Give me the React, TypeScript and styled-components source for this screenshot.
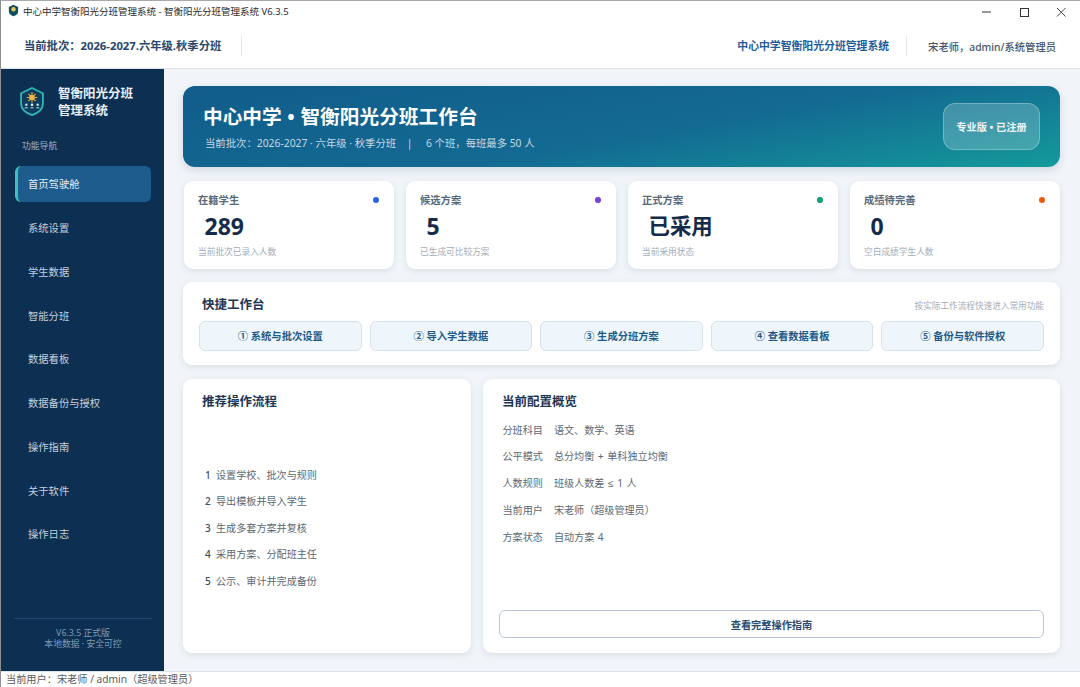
import React from 'react'
import styled, { createGlobalStyle } from 'styled-components'

const FONT = `"Noto Sans", "Noto Sans CJK SC", sans-serif`

const GlobalStyle = createGlobalStyle`
    html, body {
        margin: 0;
        padding: 0;
        background: #ffffff;
        font-family: ${FONT};
    }
    * {
        box-sizing: border-box;
    }
`

const Window = styled.div`
    width: 1080px;
    height: 687px;
    display: flex;
    flex-direction: column;
    overflow: hidden;
    background: #ffffff;
    border-top: 1px solid #a9a9a9;
    border-left: 1px solid #8f8f8f;
`

const TitleBar = styled.div`
    height: 22px;
    flex: none;
    display: flex;
    align-items: center;
    padding: 0 0 3px 7px;
    font-size: 9.5px;
    color: #2b2b2b;
`

const TitleText = styled.span`
    margin-left: 4px;
    flex: 1;
`

const WinButtons = styled.div`
    display: flex;
    align-items: center;
    gap: 27px;
    padding-right: 14px;
    margin-top: 2px;
`

const AppHeader = styled.header`
    height: 46px;
    flex: none;
    display: flex;
    align-items: center;
    padding: 1px 24px 0 23px;
    background: #ffffff;
    border-bottom: 1px solid #dde3ea;
`

const BatchLabel = styled.div`
    font-size: 11.3px;
    font-weight: 700;
    color: #27466b;
    padding-right: 20px;
    height: 20px;
    line-height: 20px;
    border-right: 1px solid #e3e8ee;
`

const Spacer = styled.div`
    flex: 1;
`

const SchoolName = styled.div`
    font-size: 10.85px;
    font-weight: 700;
    color: #1f5d99;
    padding-right: 16.5px;
    height: 20px;
    line-height: 20px;
    border-right: 1px solid #e3e8ee;
`

const UserName = styled.div`
    font-size: 10.3px;
    font-weight: 500;
    color: #44566c;
    padding-left: 21.5px;
`

const Body = styled.div`
    flex: 1;
    display: flex;
    min-height: 0;
`

const Sidebar = styled.aside`
    width: 163px;
    flex: none;
    display: flex;
    flex-direction: column;
    background: #0d2f52;
    padding: 0 13px 0 14px;
`

const Brand = styled.div`
    display: flex;
    align-items: center;
    gap: 13px;
    padding: 16px 0 0 4px;
`

const BrandName = styled.div`
    font-size: 12.5px;
    font-weight: 700;
    line-height: 17px;
    color: #e9eff6;
`

const NavHeading = styled.div`
    font-size: 8.8px;
    color: #9fb4c9;
    margin: 20px 0 0 7px;
    line-height: 14px;
`

const NavList = styled.nav`
    display: flex;
    flex-direction: column;
    gap: 8px;
    margin-top: 13px;
`

const NavItem = styled.div<{ $active?: boolean }>`
    height: 35.75px;
    display: flex;
    align-items: center;
    padding-left: ${(p) => (p.$active ? '10px' : '13px')};
    font-size: 10.3px;
    color: ${(p) => (p.$active ? '#e6edf5' : '#c3d0de')};
    border-radius: 6px;
    background: ${(p) => (p.$active ? '#1f5c8e' : 'transparent')};
    border-left: ${(p) => (p.$active ? '3px solid #3cc0bd' : 'none')};
`

const SideFooter = styled.div`
    margin: auto -1px 0 -1px;
    border-top: 1px solid #23466b;
    padding: 9px 0 21px;
    text-align: center;
    font-size: 8.8px;
    line-height: 11px;
    color: #7f9ab5;
`

const Main = styled.main`
    flex: 1;
    min-width: 0;
    display: flex;
    flex-direction: column;
    gap: 13px;
    padding: 17px 20px 18px 19px;
    background: #f1f5f9;
`

const Hero = styled.section`
    height: 81px;
    flex: none;
    margin-bottom: 1px;
    display: flex;
    align-items: center;
    justify-content: space-between;
    padding: 0 20px;
    border-radius: 12px;
    background: linear-gradient(170deg, #115c8b 0%, #136a92 55%, #149a9b 100%);
    box-shadow: 0 3px 8px rgba(40, 70, 100, 0.16);
`

const HeroTitle = styled.div`
    font-size: 19.7px;
    font-weight: 700;
    line-height: 27px;
    word-spacing: 0.5px;
    color: #ffffff;
    white-space: pre;
`

const HeroSub = styled.div`
    font-size: 10.35px;
    line-height: 14px;
    margin: 6px 0 0 2px;
    color: #c5d8e4;
    white-space: pre;
`

const HeroBadge = styled.div`
    width: 97px;
    height: 47px;
    display: flex;
    align-items: center;
    justify-content: center;
    border-radius: 12px;
    font-size: 10.2px;
    font-weight: 700;
    color: #eef5f8;
    background: rgba(255, 255, 255, 0.2);
    border: 1px solid rgba(255, 255, 255, 0.28);
`

const StatGrid = styled.section`
    display: grid;
    grid-template-columns: repeat(4, 1fr);
    gap: 12px;
    padding: 0 0.5px;
    flex: none;
`

const Card = styled.div`
    background: #ffffff;
    border-radius: 9px;
    box-shadow: 0 2px 6px rgba(50, 80, 110, 0.13);
`

const StatCard = styled(Card)`
    height: 88px;
    padding: 12px 15px 0 14.5px;
`

const StatHead = styled.div`
    display: flex;
    align-items: center;
    justify-content: space-between;
    font-size: 10.3px;
    font-weight: 700;
    line-height: 14px;
    color: #5a6978;
`

const Dot = styled.i<{ $color: string }>`
    width: 6px;
    height: 6px;
    border-radius: 50%;
    background: ${(p) => p.$color};
`

const StatValue = styled.div<{ $text?: boolean }>`
    font-size: ${(p) => (p.$text ? '21.4px' : '23px')};
    font-weight: 700;
    line-height: 30px;
    margin: 4px 0 0 6.5px;
    color: #142b49;
`

const StatNote = styled.div`
    font-size: 8.7px;
    line-height: 13px;
    margin-top: 5px;
    color: #a3adb8;
`

const QuickPanel = styled(Card)`
    height: 83px;
    flex: none;
    margin-bottom: 1px;
    padding: 13px 16px 0;
`

const QuickHead = styled.div`
    display: flex;
    align-items: center;
    justify-content: space-between;
    height: 20px;
    padding-left: 3px;
`

const PanelTitle = styled.div`
    font-size: 12.5px;
    font-weight: 700;
    line-height: 20px;
    color: #1d3654;
`

const QuickHint = styled.div`
    font-size: 8.65px;
    color: #a3adb8;
`

const QuickRow = styled.div`
    display: grid;
    grid-template-columns: repeat(5, 1fr);
    gap: 8px;
    margin-top: 6px;
`

const QuickButton = styled.div`
    height: 30px;
    display: flex;
    align-items: center;
    justify-content: center;
    padding-bottom: 1px;
    border-radius: 6px;
    font-size: 10.3px;
    font-weight: 700;
    color: #1e5a88;
    background: #eef5fb;
    border: 1px solid #d6e1ec;
`

const BottomRow = styled.section`
    flex: 1;
    min-height: 0;
    display: grid;
    grid-template-columns: 288px 1fr;
    gap: 12px;
`

const FlowPanel = styled(Card)`
    padding: 13px 19px;
`

const FlowList = styled.div`
    display: flex;
    flex-direction: column;
    gap: 12.4px;
    margin-top: 56px;
    padding-left: 3px;
`

const FlowItem = styled.div`
    font-size: 10.1px;
    line-height: 14px;
    color: #5a6875;
    white-space: pre;
`

const FlowNumber = styled.span`
    font-weight: 500;
    color: #3f4e5c;
`

const ConfigPanel = styled(Card)`
    display: flex;
    flex-direction: column;
    padding: 13px 16px 14px 19px;
`

const ConfigList = styled.div`
    display: flex;
    flex-direction: column;
    gap: 12.4px;
    margin-top: 11px;
    padding-left: 0.5px;
`

const ConfigRow = styled.div`
    display: flex;
    gap: 11px;
    font-size: 10.1px;
    line-height: 14px;
    word-spacing: 1px;
    color: #5a6875;
`

const MathSign = styled.span`
    font-family: "Liberation Sans", sans-serif;
`

const GuideButton = styled.div`
    margin: auto 0 1px -3px;
    height: 28px;
    display: flex;
    align-items: center;
    justify-content: center;
    font-size: 10.2px;
    font-weight: 700;
    color: #2c4c6e;
    background: #ffffff;
    border: 1px solid #b9c8d6;
    border-radius: 6px;
`

const StatusBar = styled.footer`
    height: 16px;
    flex: none;
    padding-left: 5px;
    background: #ffffff;
    border-top: 1px solid #dfe4ea;
    font-size: 10.2px;
    line-height: 15px;
    color: #5a5a5a;
`

const navItems = ['首页驾驶舱', '系统设置', '学生数据', '智能分班', '数据看板', '数据备份与授权', '操作指南', '关于软件', '操作日志']

const stats = [
    { label: '在籍学生', value: '289', note: '当前批次已录入人数', color: '#2f62e0' },
    { label: '候选方案', value: '5', note: '已生成可比较方案', color: '#7c3ddb' },
    { label: '正式方案', value: '已采用', note: '当前采用状态', color: '#0f9d6b', text: true },
    { label: '成绩待完善', value: '0', note: '空白成绩学生人数', color: '#e8590c' },
]

const quickActions = ['① 系统与批次设置', '② 导入学生数据', '③ 生成分班方案', '④ 查看数据看板', '⑤ 备份与软件授权']

const flowSteps = ['设置学校、批次与规则', '导出模板并导入学生', '生成多套方案并复核', '采用方案、分配班主任', '公示、审计并完成备份']

const configRows: Array<[string, React.ReactNode]> = [
    ['分班科目', '语文、数学、英语'],
    ['公平模式', '总分均衡 + 单科独立均衡'],
    ['人数规则', <>班级人数差 <MathSign>≤</MathSign> 1 人</>],
    ['当前用户', '宋老师（超级管理员）'],
    ['方案状态', '自动方案 4'],
]

const LogoMark = ({ size }: { size: number }) => (
    <svg width={size} height={size * 1.12} viewBox="0 0 50 56" fill="none">
        <path d="M25 2 L46 12 V32 C46 43 36 50 25 54 C14 50 4 43 4 32 V12 Z" fill="#0f3c5c" stroke="#2fb7b3" strokeWidth="3.5" />
        <circle cx="25" cy="20" r="5.5" fill="#f4b53f" />
        <path d="M25 10v4M25 26v4M15 20h4M31 20h4M18 13l3 3M32 13l-3 3M18 27l3-3M32 27l-3-3" stroke="#f4b53f" strokeWidth="2" />
        <circle cx="14" cy="34" r="2.4" fill="#bfe3ea" />
        <circle cx="25" cy="34" r="2.4" fill="#ffffff" />
        <circle cx="36" cy="34" r="2.4" fill="#bfe3ea" />
        <path d="M10 41c1-3 7-3 8 0zM21 41c1-3 7-3 8 0zM32 41c1-3 7-3 8 0z" fill="#bfe3ea" />
    </svg>
)

const App = () => {
    return (
        <Window>
            <GlobalStyle />
            <TitleBar>
                <svg width="11" height="13" viewBox="0 0 50 56">
                    <path d="M25 2 L46 12 V32 C46 43 36 50 25 54 C14 50 4 43 4 32 V12 Z" fill="#0f4d63" />
                    <circle cx="25" cy="22" r="10" fill="#e8c65a" />
                </svg>
                <TitleText>中心中学智衡阳光分班管理系统 - 智衡阳光分班管理系统 V6.3.5</TitleText>
                <WinButtons>
                    <svg width="10" height="10" viewBox="0 0 10 10"><path d="M0 5h9" stroke="#333" /></svg>
                    <svg width="10" height="10" viewBox="0 0 10 10"><rect x="1.5" y="1.5" width="8" height="8" fill="none" stroke="#333" /></svg>
                    <svg width="10" height="10" viewBox="0 0 10 10"><path d="M1 1l8.5 8.5M9.5 1L1 9.5" stroke="#333" strokeWidth="0.9" /></svg>
                </WinButtons>
            </TitleBar>
            <AppHeader>
                <BatchLabel>当前批次：2026-2027.六年级.秋季分班</BatchLabel>
                <Spacer />
                <SchoolName>中心中学智衡阳光分班管理系统</SchoolName>
                <UserName>宋老师，admin/系统管理员</UserName>
            </AppHeader>
            <Body>
                <Sidebar>
                    <Brand>
                        <LogoMark size={26} />
                        <BrandName>
                            智衡阳光分班
                            <br />
                            管理系统
                        </BrandName>
                    </Brand>
                    <NavHeading>功能导航</NavHeading>
                    <NavList>
                        {navItems.map((item, i) => (
                            <NavItem key={item} $active={i === 0}>
                                {item}
                            </NavItem>
                        ))}
                    </NavList>
                    <SideFooter>
                        V6.3.5 正式版
                        <br />
                        本地数据 · 安全可控
                    </SideFooter>
                </Sidebar>
                <Main>
                    <Hero>
                        <div>
                            <HeroTitle>中心中学 • 智衡阳光分班工作台</HeroTitle>
                            <HeroSub>当前批次：2026-2027 · 六年级 · 秋季分班    |     6 个班，每班最多 50 人</HeroSub>
                        </div>
                        <HeroBadge>专业版 • 已注册</HeroBadge>
                    </Hero>
                    <StatGrid>
                        {stats.map((s) => (
                            <StatCard key={s.label}>
                                <StatHead>
                                    {s.label}
                                    <Dot $color={s.color} />
                                </StatHead>
                                <StatValue $text={s.text}>{s.value}</StatValue>
                                <StatNote>{s.note}</StatNote>
                            </StatCard>
                        ))}
                    </StatGrid>
                    <QuickPanel>
                        <QuickHead>
                            <PanelTitle>快捷工作台</PanelTitle>
                            <QuickHint>按实际工作流程快速进入常用功能</QuickHint>
                        </QuickHead>
                        <QuickRow>
                            {quickActions.map((a) => (
                                <QuickButton key={a}>{a}</QuickButton>
                            ))}
                        </QuickRow>
                    </QuickPanel>
                    <BottomRow>
                        <FlowPanel>
                            <PanelTitle>推荐操作流程</PanelTitle>
                            <FlowList>
                                {flowSteps.map((s, i) => (
                                    <FlowItem key={s}>
                                        <FlowNumber>{i + 1}</FlowNumber>
                                        {`  ${s}`}
                                    </FlowItem>
                                ))}
                            </FlowList>
                        </FlowPanel>
                        <ConfigPanel>
                            <PanelTitle>当前配置概览</PanelTitle>
                            <ConfigList>
                                {configRows.map(([k, v]) => (
                                    <ConfigRow key={k}>
                                        <span>{k}</span>
                                        <span>{v}</span>
                                    </ConfigRow>
                                ))}
                            </ConfigList>
                            <GuideButton>查看完整操作指南</GuideButton>
                        </ConfigPanel>
                    </BottomRow>
                </Main>
            </Body>
            <StatusBar>当前用户：宋老师 / admin（超级管理员）</StatusBar>
        </Window>
    )
}

export default App
